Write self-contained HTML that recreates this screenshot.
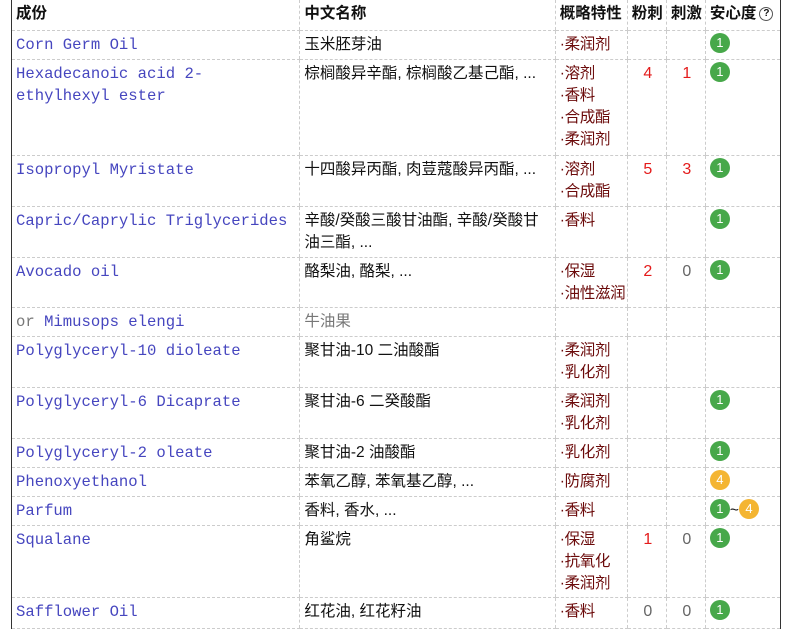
<!DOCTYPE html>
<html><head><meta charset="utf-8"><style>
body{margin:0;background:#fff;width:788px;height:628px;overflow:hidden;font-family:"Liberation Sans","Noto Sans CJK SC",sans-serif;font-size:15.5px;color:#111}
table{position:absolute;left:11px;top:0;border-collapse:collapse;table-layout:fixed;width:770px;border-left:1px solid #333;border-right:1px solid #333}
td{vertical-align:top;padding:3px 2px 0 4px;line-height:22px;border-bottom:1px dashed #ccc;border-left:1px dashed #ccc;overflow:hidden}
td:first-child{border-left:none}
th{text-align:left;font-weight:bold;padding:3px 2px 0 4px;line-height:22px;vertical-align:top;border-bottom:1px dashed #ccc;border-left:1px dashed #ccc;white-space:nowrap;overflow:hidden}
th:first-child{border-left:none}
.n{font-family:"Liberation Mono",monospace;font-size:15.6px;color:#4646bf}
.g{color:#777}
.p{color:#6b0a0a;white-space:nowrap;letter-spacing:-0.3px}
.r{color:#e41b1b;text-align:center;font-size:16px}
.z{color:#666;text-align:center;font-size:16px}
.b{display:inline-block;width:20px;height:20px;border-radius:50%;background:#47a84a;color:#fff;font-size:13px;line-height:20px;text-align:center;vertical-align:middle;margin-top:-3px}
.o{background:#f4b532}
.q{display:inline-block;width:12px;height:12px;border:1px solid #555;border-radius:50%;font-size:10px;line-height:12px;text-align:center;font-weight:bold;vertical-align:middle;margin-left:3px}
</style></head><body>
<table>
<colgroup><col style="width:288px"><col style="width:255px"><col style="width:72px"><col style="width:39px"><col style="width:39px"><col style="width:75px"></colgroup>
<tr style="height:30px"><th>成份</th><th>中文名称</th><th>概略特性</th><th>粉刺</th><th>刺激</th><th>安心度<span class="q">?</span></th></tr>
<tr style="height:29px"><td class="n">Corn Germ Oil</td><td>玉米胚芽油</td><td class="p">·柔润剂</td><td></td><td></td><td><span class="b">1</span></td></tr>
<tr style="height:96px"><td class="n">Hexadecanoic acid 2-<br>ethylhexyl ester</td><td style="white-space:nowrap">棕榈酸异辛酯, 棕榈酸乙基己酯, ...</td><td class="p">·溶剂<br>·香料<br>·合成酯<br>·柔润剂</td><td class="r">4</td><td class="r">1</td><td><span class="b">1</span></td></tr>
<tr style="height:51px"><td class="n">Isopropyl Myristate</td><td style="white-space:nowrap">十四酸异丙酯, 肉荳蔻酸异丙酯, ...</td><td class="p">·溶剂<br>·合成酯</td><td class="r">5</td><td class="r">3</td><td><span class="b">1</span></td></tr>
<tr style="height:51px"><td class="n">Capric/Caprylic Triglycerides</td><td>辛酸/癸酸三酸甘油酯, 辛酸/癸酸甘<br>油三酯, ...</td><td class="p">·香料</td><td></td><td></td><td><span class="b">1</span></td></tr>
<tr style="height:50px"><td class="n">Avocado oil</td><td>酪梨油, 酪梨, ...</td><td class="p">·保湿<br>·油性滋润</td><td class="r">2</td><td class="z">0</td><td><span class="b">1</span></td></tr>
<tr style="height:29px"><td class="n"><span class="g">or</span> Mimusops elengi</td><td class="g">牛油果</td><td></td><td></td><td></td><td></td></tr>
<tr style="height:51px"><td class="n">Polyglyceryl-10 dioleate</td><td>聚甘油-10 二油酸酯</td><td class="p">·柔润剂<br>·乳化剂</td><td></td><td></td><td></td></tr>
<tr style="height:51px"><td class="n">Polyglyceryl-6 Dicaprate</td><td>聚甘油-6 二癸酸酯</td><td class="p">·柔润剂<br>·乳化剂</td><td></td><td></td><td><span class="b">1</span></td></tr>
<tr style="height:29px"><td class="n">Polyglyceryl-2 oleate</td><td>聚甘油-2 油酸酯</td><td class="p">·乳化剂</td><td></td><td></td><td><span class="b">1</span></td></tr>
<tr style="height:29px"><td class="n">Phenoxyethanol</td><td>苯氧乙醇, 苯氧基乙醇, ...</td><td class="p">·防腐剂</td><td></td><td></td><td><span class="b o">4</span></td></tr>
<tr style="height:29px"><td class="n">Parfum</td><td>香料, 香水, ...</td><td class="p">·香料</td><td></td><td></td><td style="white-space:nowrap"><span class="b">1</span>~<span class="b o">4</span></td></tr>
<tr style="height:72px"><td class="n">Squalane</td><td>角鲨烷</td><td class="p">·保湿<br>·抗氧化<br>·柔润剂</td><td class="r">1</td><td class="z">0</td><td><span class="b">1</span></td></tr>
<tr style="height:31px"><td class="n">Safflower Oil</td><td>红花油, 红花籽油</td><td class="p">·香料</td><td class="z">0</td><td class="z">0</td><td><span class="b">1</span></td></tr>
</table>
</body></html>
